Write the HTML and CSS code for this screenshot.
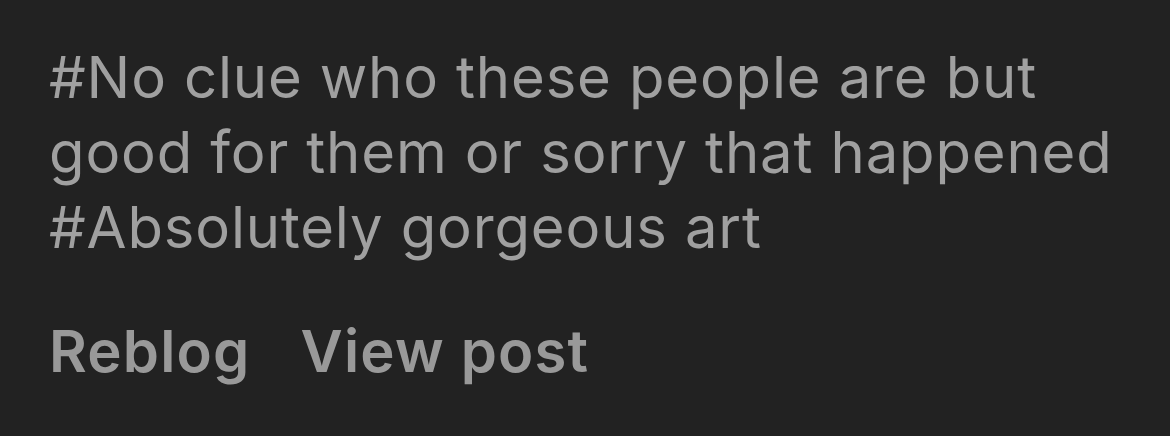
FILE: index.html
```html
<!DOCTYPE html>
<html lang="en">
<head>
    <meta charset="UTF-8">
    <meta name="viewport" content="width=device-width, initial-scale=1.0">
    <title>Tags</title>
    <link rel="stylesheet" href="styles.css">
</head>
<body>
    <div class="post-footer">
        <div class="tags">
            <a class="tag" href="#">#No clue who these people are but good for them or sorry that happened</a>
            <a class="tag" href="#">#Absolutely gorgeous art</a>
        </div>
        <div class="actions">
            <a class="action" href="#">Reblog</a>
            <a class="action" href="#">View post</a>
        </div>
    </div>
</body>
</html>
```

FILE: styles.css
```css
body {
    margin: 0;
    background-color: #222222;
    font-family: Inter, "Noto Sans", sans-serif;
}
.post-footer {
    padding: 40px 30px 0 49px;
}
.tags {
    font-size: 58px;
    line-height: 75px;
    letter-spacing: 0.85px;
    color: #a0a0a0;
}
.tag {
    display: block;
    color: inherit;
    text-decoration: none;
}
.actions {
    display: flex;
    gap: 50px;
    margin-top: 49px;
    font-size: 58px;
    line-height: 75px;
    letter-spacing: 1.2px;
    font-weight: 600;
}
.action {
    color: #999999;
    text-decoration: none;
}
```
